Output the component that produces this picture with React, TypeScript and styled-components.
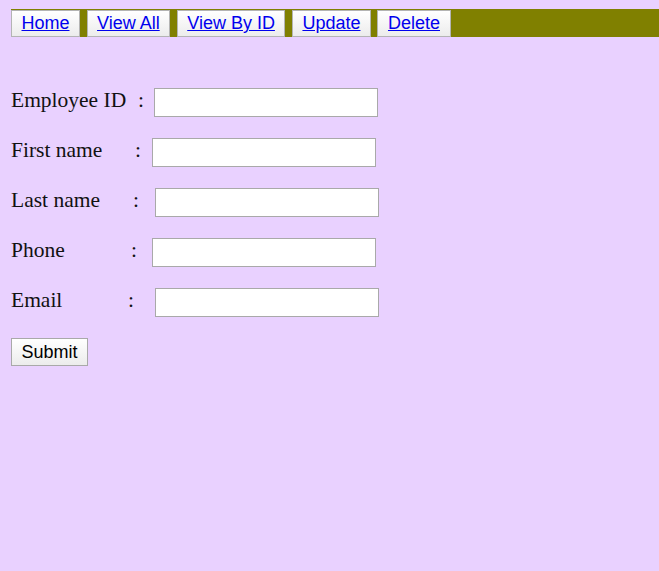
import * as React from "react";
import styled, { createGlobalStyle } from "styled-components";

const GlobalStyle = createGlobalStyle`
  html, body {
    margin: 0;
    padding: 0;
    background: #e9d1ff;
  }
  body {
    font-family: "Liberation Serif", "Times New Roman", serif;
    min-height: 571px;
  }
`;

const links = ["Home", "View All", "View By ID", "Update", "Delete"];

const fields = [
  { label: "Employee ID", colonAt: 127, inputAt: 16 },
  { label: "First name", colonAt: 124, inputAt: 17 },
  { label: "Last name", colonAt: 122, inputAt: 22 },
  { label: "Phone", colonAt: 120, inputAt: 21 },
  { label: "Email", colonAt: 117, inputAt: 27 },
];

const App: React.FunctionComponent = () => {
  return (
    <Page>
      <GlobalStyle />
      <NavBar>
        {links.map((l) => (
          <NavButton key={l}>
            <NavLink href="#">{l}</NavLink>
          </NavButton>
        ))}
      </NavBar>
      <Form onSubmit={(e) => e.preventDefault()}>
        {fields.map((f) => (
          <Row key={f.label}>
            <Label $width={f.colonAt}>{f.label}</Label>
            <Colon $width={f.inputAt}>:</Colon>
            <Input type="text" />
          </Row>
        ))}
        <SubmitButton type="submit">Submit</SubmitButton>
      </Form>
    </Page>
  );
};

export default App;

const Page = styled.div`
  padding: 9px 0 0 11px;
`;

const NavBar = styled.nav`
  display: flex;
  gap: 6.5px;
  height: 28px;
  box-sizing: border-box;
  padding-top: 1px;
  background: #808000;
`;

const NavButton = styled.div`
  display: flex;
  align-items: center;
  height: 27px;
  box-sizing: border-box;
  padding: 0 9.5px;
  border: 1px solid #b4b4b4;
  background: linear-gradient(#ffffff, #ececec);
`;

const NavLink = styled.a`
  font-family: "Liberation Sans", Arial, sans-serif;
  font-size: 18px;
  color: #0000ee;
  text-decoration: underline;
`;

const Form = styled.form`
  display: flex;
  flex-direction: column;
  align-items: flex-start;
  gap: 21px;
  margin-top: 51px;
`;

const Row = styled.div`
  display: flex;
  align-items: baseline;
  height: 29px;
`;

const Label = styled.span<{ $width: number }>`
  width: ${(p) => p.$width}px;
  font-size: 21.5px;
  color: #111;
`;

const Colon = styled.span<{ $width: number }>`
  width: ${(p) => p.$width}px;
  font-size: 21.5px;
  color: #111;
`;

const Input = styled.input`
  width: 224px;
  height: 29px;
  box-sizing: border-box;
  border: 1px solid #a9a9a9;
  background: #fff;
  font-family: "Liberation Sans", Arial, sans-serif;
  font-size: 13.33px;
  padding: 1px 2px;
  outline: none;
`;

const SubmitButton = styled.button`
  height: 28px;
  box-sizing: border-box;
  padding: 0 9.5px;
  border: 1px solid #a9a9a9;
  background: linear-gradient(#ffffff, #ececec);
  font-family: "Liberation Sans", Arial, sans-serif;
  font-size: 18px;
  color: #000;
`;
